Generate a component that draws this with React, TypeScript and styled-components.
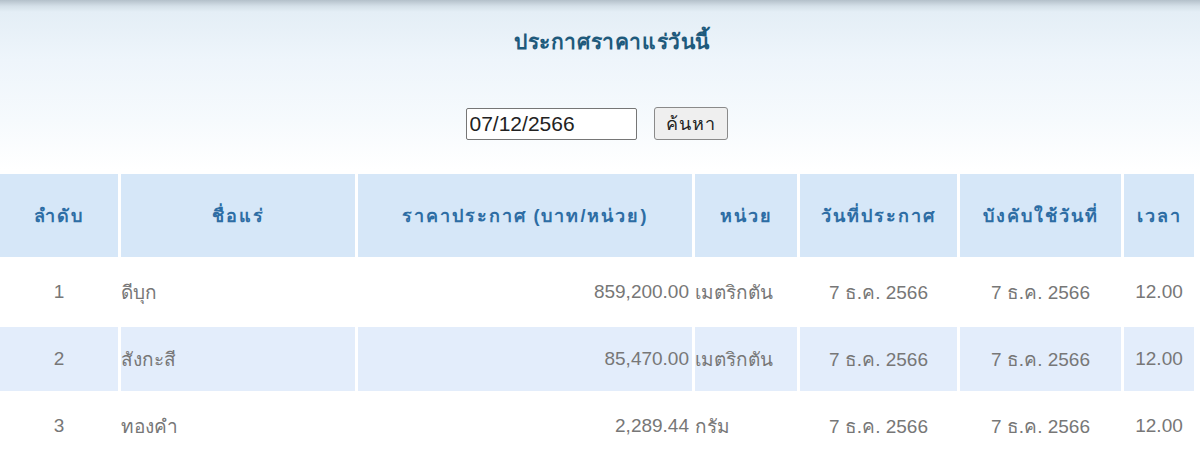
import React from "react";
import styled, { createGlobalStyle } from "styled-components";

const Global = createGlobalStyle`
  html, body { margin: 0; padding: 0; background: #fff; }
  body { font-family: Tahoma, "Liberation Sans", "Noto Sans", sans-serif; overflow: hidden; }
`;

const Page = styled.div`
  width: 1200px;
  height: 463px;
  overflow: hidden;
  background: linear-gradient(
    to bottom,
    #b4c0ca 0px,
    #d4dfe8 6px,
    #e4eef6 12px,
    #eef5fb 60px,
    #f6fafd 120px,
    #ffffff 170px
  );
`;

const Title = styled.h1`
  margin: 0;
  padding: 27px 0 0 24px;
  height: 30px;
  text-align: center;
  font-size: 21px;
  letter-spacing: 0.6px;
  font-weight: bold;
  color: #1e5a7c;
  line-height: 30px;
`;

const SearchForm = styled.form`
  display: flex;
  justify-content: center;
  align-items: center;
  gap: 17px;
  margin: 50px 0 0;
  padding-right: 7px;
  height: 33px;
`;

const DateInput = styled.input`
  box-sizing: border-box;
  width: 171px;
  height: 32px;
  border: 1px solid #767676;
  border-radius: 2px;
  padding: 0 3px;
  font-family: "Liberation Sans", Arial, sans-serif;
  font-size: 21px;
  color: #222;
  background: #fff;
`;

const SearchButton = styled.button`
  box-sizing: border-box;
  width: 74px;
  height: 33px;
  border: 1px solid #8a8a8a;
  border-radius: 3px;
  background: #efefef;
  font-family: Tahoma, "Liberation Sans", sans-serif;
  font-size: 18px;
  letter-spacing: 1px;
  color: #222;
  padding: 0;
`;

const Table = styled.table`
  table-layout: fixed;
  border-collapse: separate;
  border-spacing: 3px;
  margin: 31px 0 0 -3px;
  width: 1200px;
`;

const HeadCell = styled.th<{ $w: number }>`
  width: ${(p) => p.$w}px;
  height: 83px;
  padding: 0;
  background: #d6e7f8;
  color: #2d6da4;
  font-weight: bold;
  font-size: 18px;
  letter-spacing: 2px;
  text-align: center;
  white-space: nowrap;
`;

const Row = styled.tr<{ $alt?: boolean }>`
  td {
    background: ${(p) => (p.$alt ? "#e3edfb" : "transparent")};
  }
`;

const Cell = styled.td<{ $align?: "left" | "center" | "right" }>`
  height: 64px;
  padding: ${(p) => (p.$align === "right" ? "0 3px 0 0" : "0")};
  font-size: 19px;
  color: #777;
  text-align: ${(p) => p.$align || "center"};
  white-space: nowrap;
`;

const cols = [
  { label: "ลำดับ", w: 118 },
  { label: "ชื่อแร่", w: 234 },
  { label: "ราคาประกาศ (บาท/หน่วย)", w: 334 },
  { label: "หน่วย", w: 102 },
  { label: "วันที่ประกาศ", w: 157 },
  { label: "บังคับใช้วันที่", w: 161 },
  { label: "เวลา", w: 70 },
];

const rows = [
  { no: "1", name: "ดีบุก", price: "859,200.00", unit: "เมตริกตัน" },
  { no: "2", name: "สังกะสี", price: "85,470.00", unit: "เมตริกตัน" },
  { no: "3", name: "ทองคำ", price: "2,289.44", unit: "กรัม" },
];

export default function App() {
  return (
    <Page>
      <Global />
      <Title>ประกาศราคาแร่วันนี้</Title>
      <SearchForm onSubmit={(e) => e.preventDefault()}>
        <DateInput type="text" defaultValue="07/12/2566" />
        <SearchButton type="submit">ค้นหา</SearchButton>
      </SearchForm>
      <Table>
        <thead>
          <tr>
            {cols.map((c) => (
              <HeadCell key={c.label} $w={c.w}>
                {c.label}
              </HeadCell>
            ))}
          </tr>
        </thead>
        <tbody>
          {rows.map((r, i) => (
            <Row key={r.no} $alt={i % 2 === 1}>
              <Cell>{r.no}</Cell>
              <Cell $align="left">{r.name}</Cell>
              <Cell $align="right">{r.price}</Cell>
              <Cell $align="left">{r.unit}</Cell>
              <Cell>7 ธ.ค. 2566</Cell>
              <Cell>7 ธ.ค. 2566</Cell>
              <Cell>12.00</Cell>
            </Row>
          ))}
        </tbody>
      </Table>
    </Page>
  );
}
